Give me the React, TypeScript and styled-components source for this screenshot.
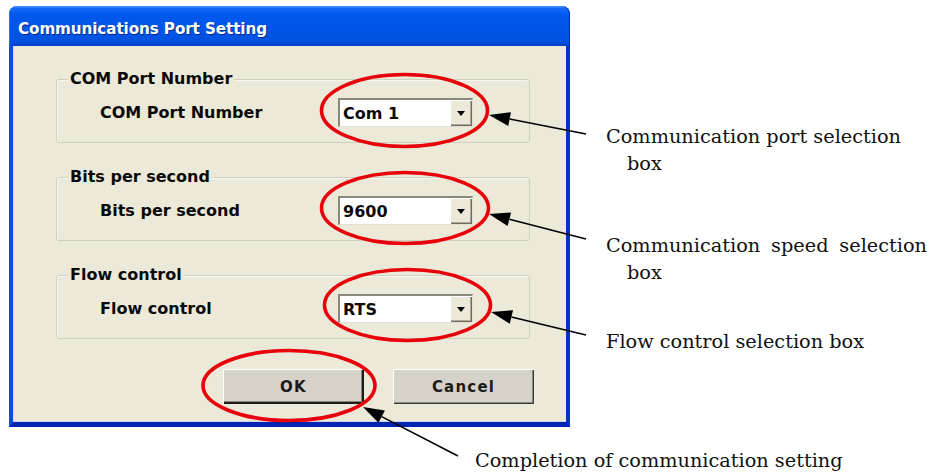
import styled, { createGlobalStyle } from "styled-components";

const GlobalStyle = createGlobalStyle`
  html, body {
    margin: 0;
    padding: 0;
    background: #ffffff;
  }
`;

interface SettingGroup {
  legend: string;
  label: string;
  value: string;
}

const groups: SettingGroup[] = [
  { legend: "COM Port Number", label: "COM Port Number", value: "Com 1" },
  { legend: "Bits per second", label: "Bits per second", value: "9600" },
  { legend: "Flow control", label: "Flow control", value: "RTS" },
];

interface Point {
  x: number;
  y: number;
}

// callout arrows: tail sits next to the note, tip touches the red ring
const arrows: { from: Point; to: Point }[] = [
  { from: { x: 586, y: 134 }, to: { x: 489, y: 115 } },
  { from: { x: 586, y: 239 }, to: { x: 489, y: 214 } },
  { from: { x: 586, y: 335 }, to: { x: 491, y: 312 } },
  { from: { x: 458, y: 456 }, to: { x: 363, y: 407 } },
];

const rings = [
  { cx: 404.5, cy: 110.5, rx: 83, ry: 36 },
  { cx: 405, cy: 208, rx: 83.5, ry: 35.5 },
  { cx: 407.5, cy: 305, rx: 83, ry: 35.5 },
  { cx: 289, cy: 385.5, rx: 86, ry: 35 },
];

const Arrow = ({ from, to }: { from: Point; to: Point }) => {
  const dx = to.x - from.x;
  const dy = to.y - from.y;
  const len = Math.hypot(dx, dy);
  const ux = dx / len;
  const uy = dy / len;
  const headLen = 21;
  const headHalf = 7;
  const bx = to.x - ux * headLen;
  const by = to.y - uy * headLen;
  const head = [
    `${to.x},${to.y}`,
    `${bx - uy * headHalf},${by + ux * headHalf}`,
    `${bx + uy * headHalf},${by - ux * headHalf}`,
  ].join(" ");
  return (
    <g>
      <line x1={from.x} y1={from.y} x2={bx} y2={by} stroke="#000" strokeWidth={1.6} />
      <polygon points={head} fill="#000" />
    </g>
  );
};

const Combo = ({ value }: { value: string }) => (
  <ComboBox>
    <ComboText>{value}</ComboText>
    <DropButton>
      <svg width="8" height="5" viewBox="0 0 8 5">
        <path d="M0 0 H8 L4 5 Z" fill="#000" />
      </svg>
    </DropButton>
  </ComboBox>
);

const App = () => {
  return (
    <Page>
      <GlobalStyle />
      <TopRow>
        <Window>
          <TitleBar>
            <Title>Communications Port Setting</Title>
          </TitleBar>
          <Body>
            {groups.map((g) => (
              <Group key={g.legend}>
                <Legend>{g.legend}</Legend>
                <Row>
                  <FieldLabel>{g.label}</FieldLabel>
                  <Combo value={g.value} />
                </Row>
              </Group>
            ))}
            <ButtonRow>
              <DialogButton $default>OK</DialogButton>
              <DialogButton>Cancel</DialogButton>
            </ButtonRow>
          </Body>
        </Window>

        <Notes>
          <Note $top={117}>
            <NoteLine>Communication port selection</NoteLine>
            <NoteLine $indent>box</NoteLine>
          </Note>
          <Note $top={55}>
            <NoteLine $justify>Communication speed selection</NoteLine>
            <NoteLine $indent>box</NoteLine>
          </Note>
          <Note $top={42}>
            <NoteLine>Flow control selection box</NoteLine>
          </Note>
        </Notes>
      </TopRow>

      <BottomRow>
        <NoteLine>Completion of communication setting</NoteLine>
      </BottomRow>

      <Overlay width="942" height="472" viewBox="0 0 942 472">
        {rings.map((r, i) => (
          <ellipse
            key={i}
            cx={r.cx}
            cy={r.cy}
            rx={r.rx}
            ry={r.ry}
            fill="none"
            stroke="#e8000b"
            strokeWidth={3.6}
          />
        ))}
        {arrows.map((a, i) => (
          <Arrow key={i} from={a.from} to={a.to} />
        ))}
      </Overlay>
    </Page>
  );
};

const Page = styled.div`
  position: relative;
  width: 942px;
  height: 472px;
  overflow: hidden;
  background: #ffffff;
  display: flex;
  flex-direction: column;
`;

const TopRow = styled.div`
  display: flex;
  flex-direction: row;
  align-items: flex-start;
  padding: 6px 0 0 9px;
`;

const Window = styled.div`
  width: 561px;
  height: 421px;
  display: flex;
  flex-direction: column;
  flex-shrink: 0;
`;

const TitleBar = styled.div`
  height: 40px;
  display: flex;
  align-items: center;
  padding: 0 0 0 9px;
  border-radius: 8px 8px 0 0;
  background: linear-gradient(
    180deg,
    #4f9cff 0%,
    #1767f5 6%,
    #0058ee 22%,
    #0055e6 60%,
    #0052e0 88%,
    #0040c8 100%
  );
  box-shadow: inset 1px 0 0 #2a6ff0, inset -1px 0 0 #0030b8;
`;

const Title = styled.span`
  font-family: "DejaVu Sans", sans-serif;
  font-weight: bold;
  font-size: 15.2px;
  letter-spacing: -0.1px;
  color: #ffffff;
  text-shadow: 1px 1px 0 #0a2a8c;
  margin-top: 6px;
`;

const Body = styled.div`
  flex: 1;
  background: #ece9d8;
  border-left: 4px solid #0a4ee6;
  border-right: 4px solid #0332c4;
  border-bottom: 5px solid #0024b0;
  box-shadow: inset 1px 0 0 #cfdcf5, inset 0 -1px 0 #c9d6f0;
  padding: 33px 0 0 43px;
  display: flex;
  flex-direction: column;
  gap: 34px;
`;

const Group = styled.div`
  width: 472px;
  border: 1px solid #d0d0bf;
  border-radius: 3px;
  box-shadow: inset 1px 1px 0 #f7f6f0;
  padding: 0 0 15px 0;
`;

const Legend = styled.span`
  display: block;
  width: fit-content;
  margin: -10px 0 0 11px;
  padding: 0 2px;
  background: #ece9d8;
  font-family: "DejaVu Sans", sans-serif;
  font-weight: bold;
  font-size: 16px;
  line-height: 18px;
  color: #0a0a0a;
`;

const Row = styled.div`
  display: flex;
  flex-direction: row;
  align-items: center;
  margin-top: 10px;
  padding-left: 43px;
`;

const FieldLabel = styled.span`
  width: 238px;
  font-family: "DejaVu Sans", sans-serif;
  font-weight: bold;
  font-size: 16px;
  color: #0a0a0a;
`;

const ComboBox = styled.div`
  width: 135px;
  height: 29px;
  box-sizing: border-box;
  display: flex;
  flex-direction: row;
  background: #ffffff;
  border-top: 2px solid #8a877c;
  border-left: 2px solid #8a877c;
  border-right: 1px solid #e2dfd2;
  border-bottom: 1px solid #e2dfd2;
`;

const ComboText = styled.span`
  flex: 1;
  display: flex;
  align-items: center;
  padding-left: 3px;
  font-family: "DejaVu Sans", sans-serif;
  font-weight: bold;
  font-size: 16px;
  color: #0a0a0a;
`;

const DropButton = styled.span`
  width: 22px;
  display: flex;
  align-items: center;
  justify-content: center;
  background: #ece9d8;
  box-shadow: inset 1px 1px 0 #ffffff, inset -1px -1px 0 #6f6c62,
    inset -2px -2px 0 #aca899;
`;

const ButtonRow = styled.div`
  display: flex;
  flex-direction: row;
  gap: 29px;
  margin-top: -4px;
  padding-left: 167px;
`;

const DialogButton = styled.button<{ $default?: boolean }>`
  width: 141px;
  height: 35px;
  margin: 0;
  padding: 0;
  border: none;
  background: #d6d2ca;
  font-family: "DejaVu Sans", sans-serif;
  font-weight: bold;
  font-size: 15px;
  letter-spacing: 1.2px;
  color: #1a1a1a;
  box-shadow: ${(p) =>
    p.$default
      ? "inset 1px 1px 0 #ffffff, inset -2px -2px 0 #1c1c1c, inset -3px -3px 0 #8a877c"
      : "inset 1px 1px 0 #ffffff, inset -1px -1px 0 #3a3a3a, inset -2px -2px 0 #8a877c"};
`;

const Notes = styled.div`
  display: flex;
  flex-direction: column;
  margin-left: 36px;
`;

const Note = styled.div<{ $top: number }>`
  margin-top: ${(p) => p.$top}px;
  display: flex;
  flex-direction: column;
`;

const NoteLine = styled.div<{ $indent?: boolean; $justify?: boolean }>`
  font-family: "DejaVu Serif", "Liberation Serif", serif;
  font-size: 19.3px;
  line-height: 27px;
  color: #111111;
  white-space: nowrap;
  padding-left: ${(p) => (p.$indent ? "21px" : "0")};
  width: ${(p) => (p.$justify ? "321px" : "auto")};
  text-align: ${(p) => (p.$justify ? "justify" : "left")};
  text-align-last: ${(p) => (p.$justify ? "justify" : "auto")};
`;

const BottomRow = styled.div`
  display: flex;
  flex-direction: row;
  margin-top: 20px;
  padding-left: 475px;
`;

const Overlay = styled.svg`
  position: absolute;
  left: 0;
  top: 0;
  pointer-events: none;
`;

export default App;
